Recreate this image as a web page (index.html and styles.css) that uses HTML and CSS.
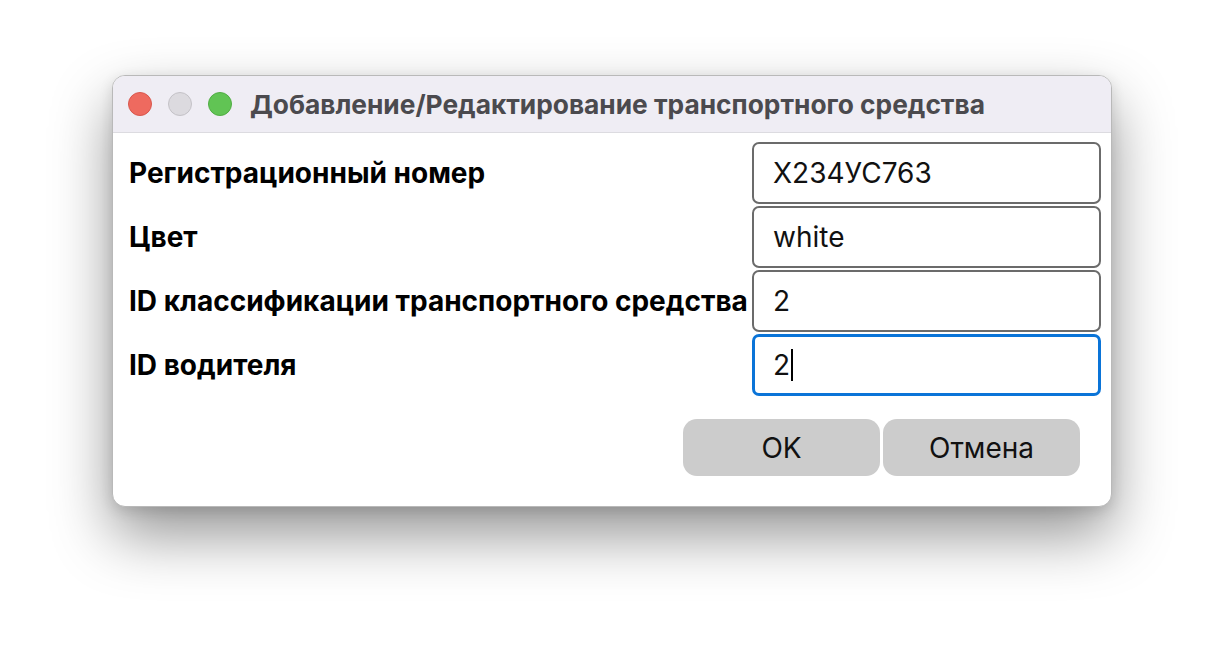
FILE: index.html
```html
<!DOCTYPE html>
<html lang="ru">
<head>
<meta charset="utf-8">
<link rel="stylesheet" href="styles.css">
</head>
<body>
<div class="window">
  <div class="titlebar">
    <div class="lights">
      <span class="light red"></span>
      <span class="light gray"></span>
      <span class="light green"></span>
    </div>
    <div class="title">Добавление/Редактирование транспортного средства</div>
  </div>
  <div class="content">
    <div class="form">
      <div class="label">Регистрационный номер</div>
      <div class="field">X234УС763</div>
      <div class="label">Цвет</div>
      <div class="field">white</div>
      <div class="label">ID классификации транспортного средства</div>
      <div class="field">2</div>
      <div class="label">ID водителя</div>
      <div class="field focused">2<span class="caret"></span></div>
    </div>
    <div class="buttons">
      <div class="btn">OK</div>
      <div class="btn">Отмена</div>
    </div>
  </div>
</div>
</body>
</html>
```
FILE: styles.css
```css
html, body {
  margin: 0;
  padding: 0;
  background: #ffffff;
  width: 1224px;
  height: 656px;
  overflow: hidden;
}
body {
  display: flex;
  justify-content: center;
  align-items: flex-start;
  padding-top: 75px;
  box-sizing: border-box;
  font-family: Inter, "Noto Sans", sans-serif;
}
.window {
  width: 1000px;
  height: 432px;
  box-sizing: border-box;
  border: 1px solid #b9b9b9;
  border-radius: 13px;
  background: #ffffff;
  overflow: hidden;
  box-shadow: 0 28px 60px rgba(0,0,0,0.42), 0 4px 14px rgba(0,0,0,0.12);
}
.titlebar {
  height: 57px;
  box-sizing: border-box;
  background: #efedf4;
  border-bottom: 1px solid #dcdbe0;
  display: flex;
  align-items: center;
  padding-left: 15px;
}
.lights {
  display: flex;
  gap: 16px;
  margin-right: 18px;
}
.light {
  width: 24px;
  height: 24px;
  border-radius: 50%;
  box-sizing: border-box;
}
.red { background: #ee6a5f; border: 1px solid #d9574d; }
.gray { background: #dcdadf; border: 1px solid #c4c2c7; }
.green { background: #61c454; border: 1px solid #50ad43; }
.title {
  font-size: 26.3px;
  font-weight: 700;
  color: #4b4a4e;
}
.content {
  padding: 9px 10px 0 16px;
}
.form {
  display: grid;
  grid-template-columns: 1fr 349px;
  row-gap: 2px;
}
.label {
  display: flex;
  align-items: center;
  font-size: 28px;
  font-weight: 700;
  color: #000;
  white-space: nowrap;
}
.field {
  height: 62px;
  box-sizing: border-box;
  border: 2px solid #6b6b6b;
  border-radius: 7px;
  display: flex;
  align-items: center;
  padding-left: 19px;
  font-size: 28px;
  color: #111;
}
.field.focused {
  border: 3px solid #0a74d8;
  padding-left: 18px;
}
.caret {
  display: inline-block;
  width: 2px;
  height: 32px;
  background: #000;
  margin-left: 1px;
}
.buttons {
  display: flex;
  justify-content: flex-end;
  gap: 3px;
  margin-top: 23px;
  padding-right: 21px;
}
.btn {
  width: 197px;
  height: 57px;
  border-radius: 14px;
  background: #cccccc;
  display: flex;
  align-items: center;
  justify-content: center;
  font-size: 28px;
  color: #111;
}
```
